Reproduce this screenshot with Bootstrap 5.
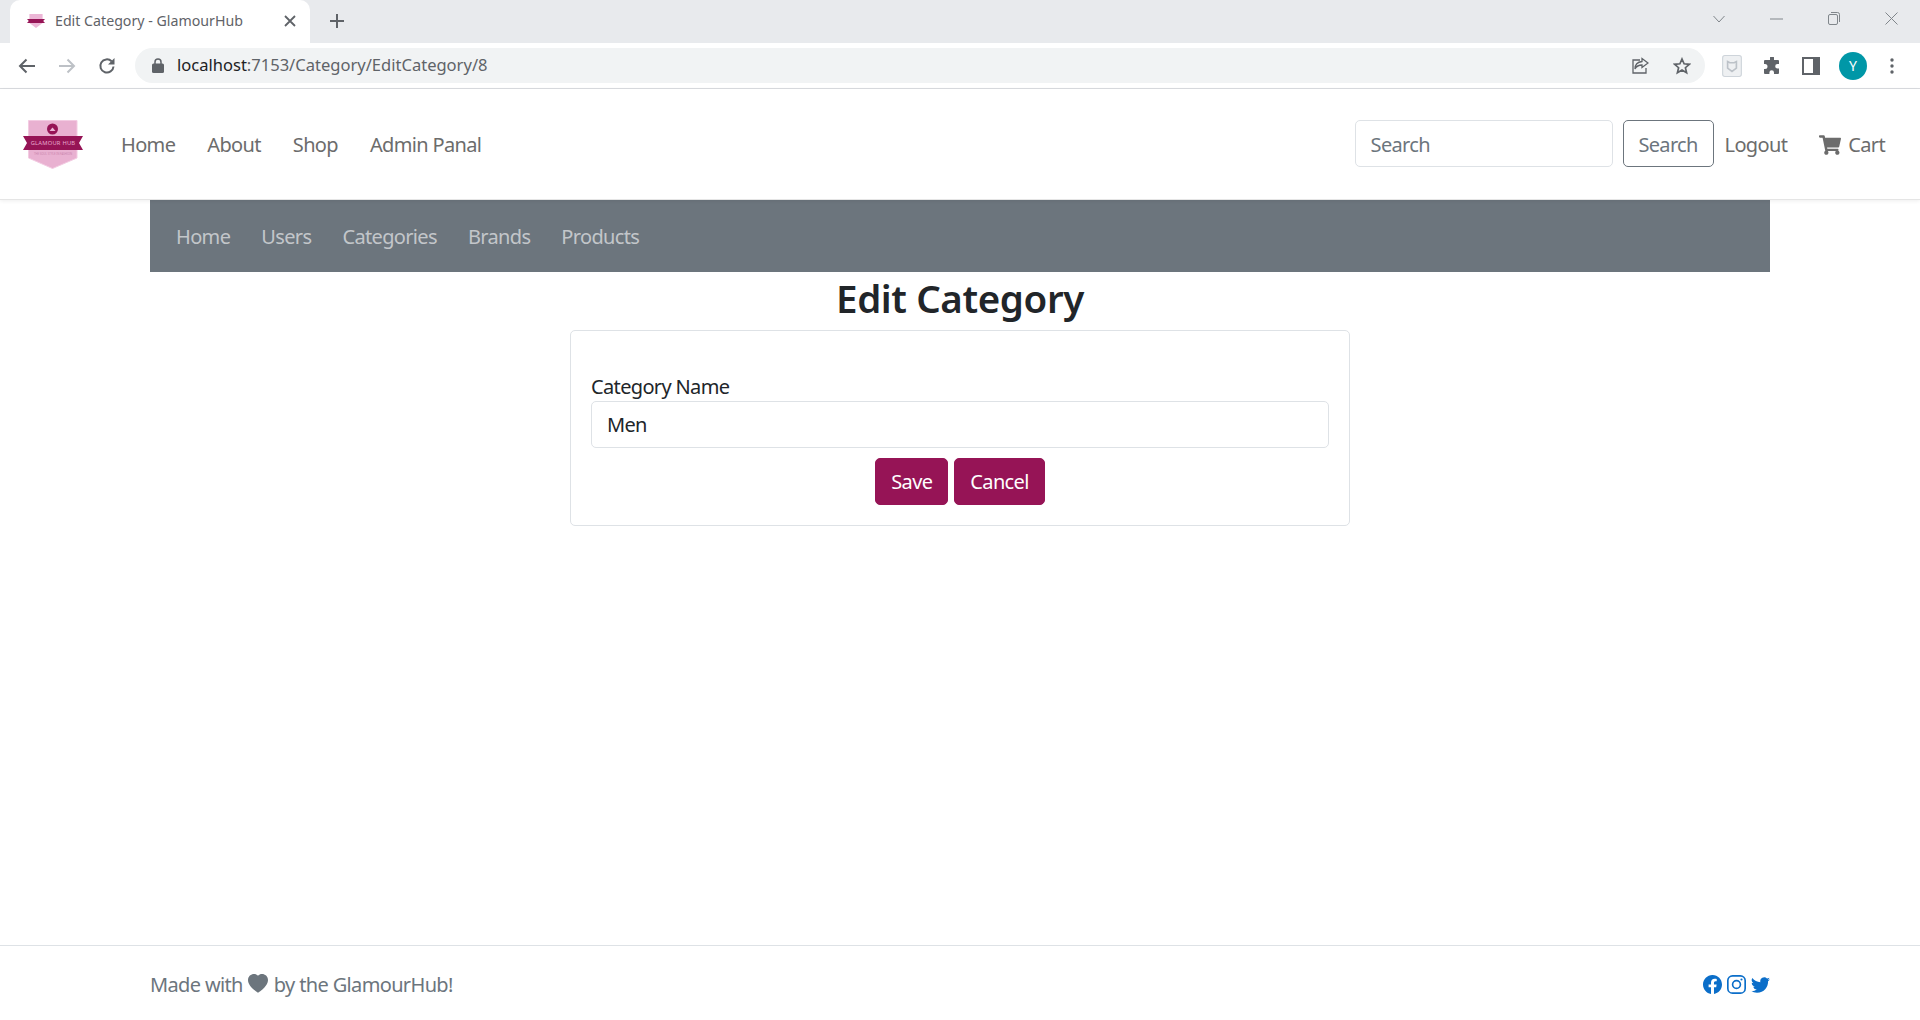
<!DOCTYPE html>
<html lang="en">
<head>
    <meta charset="UTF-8">
    <meta name="viewport" content="width=device-width, initial-scale=1.0">
    <title>Edit Category - GlamourHub</title>
    <link href="https://cdn.jsdelivr.net/npm/bootstrap@5.3.0/dist/css/bootstrap.min.css" rel="stylesheet">
    <style>
        html, body { height: 100%; }
        body { font-family: "Noto Sans", "Open Sans", sans-serif; font-size: 20px; letter-spacing: -.65px; color: #212529; overflow: hidden; }
        .page-shell { height: 1020px; }

        /* browser chrome */
        .tab-strip { height: 43px; background: #e8eaed; }
        .tab-active { width: 300px; height: 43px; margin-left: 10px; background: #fff; border-radius: 10px 10px 0 0; padding: 0 14px 2px 17px; color: #5f6368; letter-spacing: 0; }
        .tab-title { margin-left: 10px; font-size: 14.2px; }
        .new-tab { margin-left: 19px; margin-bottom: 2px; }
        .win-btns { gap: 45px; padding-right: 22px; padding-bottom: 6px; }
        .tool-strip { height: 46px; border-bottom: 1px solid #dadce0; background: #fff; padding-left: 17px; padding-right: 17px; }
        .nav-arrows { gap: 20px; }
        .url-pill { height: 35px; margin-left: 18px; border-radius: 18px; background: #f1f3f4; padding: 0 14px 0 17px; font-size: 16.55px; letter-spacing: 0; color: #5f6368; width: 1570px; }
        .url-host { color: #202124; }
        .url-text { margin-left: 13px; }
        .tool-icons { margin-left: 17px; gap: 21px; }
        .avatar-dot { width: 28px; height: 28px; margin: 0 2px 0 -2px; border-radius: 50%; background: #0097a7; color: #fff; font-size: 14px; letter-spacing: 0; }

        /* site header */
        .site-head { height: 111px; padding: 0 27px 0 23px; border-bottom: 1px solid #e5e5e5; box-shadow: 0 1px 4px rgba(0,0,0,.07); background: #fff; }
        .site-head .nav-link { color: #6c6c6c; padding-top: 10px; }
        .site-logo { margin-top: 2px; }
        .main-links { margin-left: 30px; gap: 16px; }
        .search-form { margin-top: -2px; }
        .search-box { width: 258px; height: 47px; font-size: 20px; letter-spacing: -.65px; border-radius: 5px; padding: 8px 15px 6px; }
        .search-box::placeholder { color: #6c757d; }
        .search-btn { height: 47px; width: 91px; margin-left: 10px; font-size: 20px; letter-spacing: -.65px; color: #6c757d; border-color: #6c757d; border-radius: 5px; padding: 4px 0 0; }
        .logout-link { margin-left: 3px; }
        .cart-link { margin-left: 16px; }
        .cart-link .nav-link { gap: 7px; }

        /* admin bar */
        .admin-bar { width: 1620px; height: 72px; margin: 0 auto; background: #6c757d; padding: 2px 26px 0; gap: 31px; }
        .admin-bar .nav-link { color: rgba(255,255,255,.6); padding: 0; }

        .edit-title { font-size: 38.5px; font-weight: 600; line-height: 48px; margin: 2px 0 8px; text-align: center; letter-spacing: -.4px; }
        .edit-card { width: 780px; height: 196px; margin: 0 auto; border-radius: 5px; padding: 42px 20px 0; border-color: #dee2e6; }
        .edit-label { display: block; line-height: 28px; margin-bottom: 0; }
        .edit-input { height: 47px; font-size: 20px; letter-spacing: -.65px; border-radius: 5px; padding-left: 15px; color: #212529; }
        .form-actions { margin-top: 10px; gap: 6px; }
        .btn-wine { height: 47px; padding: 0 15px; font-size: 20px; letter-spacing: -.65px; background: #961456; border-color: #961456; color: #fff; border-radius: 5px; }

        .site-foot { height: 75px; border-top: 1px solid #dee2e6; padding: 4px 150px 0; color: #6c757d; }
        .heart-icon { margin: 0 1px; position: relative; top: -1px; }
        .social-links { gap: 5px; color: #0b6ec9; margin-top: -1px; }
    </style>
</head>
<body>
<div class="page-shell d-flex flex-column">

    <div class="tab-strip d-flex align-items-end justify-content-between">
        <div class="d-flex align-items-center">
            <div class="tab-active d-flex align-items-center">
                <svg width="18" height="16" viewBox="0 0 60 50"><polygon points="8,2 52,2 52,32 30,48 8,32" fill="#ecb6d6"/><polygon points="0,18 60,18 54,25 60,32 0,32 6,25" fill="#961456"/></svg>
                <span class="tab-title flex-grow-1">Edit Category - GlamourHub</span>
                <svg width="12" height="12" viewBox="0 0 12 12"><path d="M1 1l10 10M11 1L1 11" stroke="#5f6368" stroke-width="1.8"/></svg>
            </div>
            <svg class="new-tab" width="16" height="16" viewBox="0 0 16 16"><path d="M8 1v14M1 8h14" stroke="#5f6368" stroke-width="2"/></svg>
        </div>
        <div class="win-btns d-flex align-items-center h-100">
            <svg width="12" height="8" viewBox="0 0 12 8"><path d="M.5 1l5.5 6 5.5-6" fill="none" stroke="#80868b"/></svg>
            <svg width="13" height="2" viewBox="0 0 13 2"><path d="M0 1h13" stroke="#80868b"/></svg>
            <svg width="12" height="13" viewBox="0 0 12 13"><rect x=".5" y="2.5" width="9" height="10" rx="1.5" fill="none" stroke="#80868b"/><path d="M3 .5h6.5a2 2 0 0 1 2 2V10" fill="none" stroke="#80868b"/></svg>
            <svg width="13" height="13" viewBox="0 0 13 13"><path d="M.5.5l12 12M12.5.5l-12 12" stroke="#80868b"/></svg>
        </div>
    </div>

    <div class="tool-strip d-flex align-items-center">
        <div class="nav-arrows d-flex align-items-center">
            <svg width="20" height="20" viewBox="0 0 20 20"><path d="M18 10H3M9.500 3.500L3 10l6.500 6.500" fill="none" stroke="#5f6368" stroke-width="2"/></svg>
            <svg width="20" height="20" viewBox="0 0 20 20"><path d="M2 10h15M10.500 3.500L17 10l-6.500 6.500" fill="none" stroke="#bdc1c6" stroke-width="2"/></svg>
            <svg width="20" height="20" viewBox="0 0 20 20"><path d="M16.500 10.500a6.600 6.600 0 1 1-1.900-5.200" fill="none" stroke="#5f6368" stroke-width="2"/><path d="M17.500 2v6.500H11z" fill="#5f6368"/></svg>
        </div>
        <div class="url-pill d-flex align-items-center">
            <svg width="12" height="15" viewBox="0 0 12 15"><rect y="5.500" width="12" height="9.500" rx="1.500" fill="#5f6368"/><path d="M3 6V4a3 3 0 0 1 6 0v2" fill="none" stroke="#5f6368" stroke-width="1.500"/></svg>
            <span class="url-text flex-grow-1"><span class="url-host">localhost</span>:7153/Category/EditCategory/8</span>
            <div class="d-flex align-items-center gap-4">
                <svg width="18" height="18" viewBox="0 0 18 18"><path d="M9 3H2v13h13v-5" fill="none" stroke="#5f6368" stroke-width="1.300"/><path d="M11 1.500l6 4.500-6 4.500V8C8 8 5.500 9 4 12c0-4 2.500-7 7-7.500z" fill="#f1f3f4" stroke="#5f6368" stroke-width="1.300"/></svg>
                <svg width="18" height="18" viewBox="0 0 18 18"><path d="M9 2l2.100 4.800 5.200.5-3.900 3.400 1.200 5.100L9 13.100l-4.600 2.700 1.200-5.100L1.700 7.300l5.200-.5z" fill="none" stroke="#5f6368" stroke-width="1.700"/></svg>
            </div>
        </div>
        <div class="tool-icons d-flex align-items-center">
            <svg width="20" height="22" viewBox="0 0 18 20"><rect x=".5" y=".5" width="17" height="19" rx="2" fill="#eef0f2" stroke="#ced4da"/><path d="M5 6l2 1h4l2-1v6l-4 3-4-3z" fill="none" stroke="#bcc2c8" stroke-width="1.500"/></svg>
            <svg width="18" height="18" viewBox="0 0 18 18"><path d="M7 1a2 2 0 0 1 4 0v2h4a1 1 0 0 1 1 1v3h-1.500a2.300 2.300 0 0 0 0 4.600H16V16a1 1 0 0 1-1 1h-4v-1.500a2.300 2.300 0 0 0-4.600 0V17H2a1 1 0 0 1-1-1v-4h1a2.500 2.500 0 0 0 0-5H1V4a1 1 0 0 1 1-1h5z" fill="#5f6368"/></svg>
            <svg width="18" height="18" viewBox="0 0 18 18"><rect width="18" height="18" fill="#5f6368"/><rect x="2" y="2" width="9" height="14" fill="#fff"/></svg>
            <div class="avatar-dot d-flex align-items-center justify-content-center">Y</div>
            <svg width="4" height="16" viewBox="0 0 4 16"><circle cx="2" cy="2" r="1.700" fill="#5f6368"/><circle cx="2" cy="8" r="1.700" fill="#5f6368"/><circle cx="2" cy="14" r="1.700" fill="#5f6368"/></svg>
        </div>
    </div>

    <nav class="site-head navbar navbar-expand d-flex align-items-center">
        <svg class="site-logo" width="60" height="50" viewBox="0 0 60 50">
            <polygon points="5.500,.5 54,.5 54,38 29.500,48.500 5.500,38" fill="#e9b1d1" stroke="#f3cbe2"/>
            <circle cx="29.500" cy="9" r="5.500" fill="#961456"/>
            <path d="M26.500 11h6l-3-3.500z" fill="#ecb6d6"/>
            <polygon points="0,16 60,16 56,23 60,30 0,30 4,23" fill="#961456"/>
            <text x="30" y="25" font-size="5.800" fill="#e8a9cd" text-anchor="middle" letter-spacing=".2">GLAMOUR HUB</text>
            <text x="30" y="35" font-size="2.800" fill="#c984ad" text-anchor="middle" letter-spacing="0">THE SOUL STYLE IN FASHION</text>
        </svg>
        <ul class="navbar-nav main-links">
            <li class="nav-item"><a class="nav-link" href="#">Home</a></li>
            <li class="nav-item"><a class="nav-link" href="#">About</a></li>
            <li class="nav-item"><a class="nav-link" href="#">Shop</a></li>
            <li class="nav-item"><a class="nav-link" href="#">Admin Panal</a></li>
        </ul>
        <form class="search-form d-flex align-items-center ms-auto">
            <input class="form-control search-box" type="search" placeholder="Search" aria-label="Search">
            <button class="btn search-btn" type="button">Search</button>
        </form>
        <ul class="navbar-nav align-items-center">
            <li class="nav-item logout-link"><a class="nav-link" href="#">Logout</a></li>
            <li class="nav-item cart-link">
                <a class="nav-link d-flex align-items-center" href="#">
                    <svg width="22" height="20" viewBox="0 0 576 512"><path fill="#6c6c6c" d="M528.12 301.319l47.273-208C578.806 78.301 567.391 64 551.99 64H159.208l-9.166-44.81C147.758 8.021 137.93 0 126.529 0H24C10.745 0 0 10.745 0 24v16c0 13.255 10.745 24 24 24h69.883l70.248 343.435C147.325 417.1 136 435.222 136 456c0 30.928 25.072 56 56 56s56-25.072 56-56c0-15.674-6.447-29.835-16.824-40h209.647C430.447 426.165 424 440.326 424 456c0 30.928 25.072 56 56 56s56-25.072 56-56c0-22.172-12.888-41.332-31.579-50.405l5.517-24.276c3.413-15.018-8.002-29.319-23.403-29.319H218.117l-6.545-32h293.145c11.206 0 20.92-7.754 23.403-18.681z"/></svg>
                    Cart
                </a>
            </li>
        </ul>
    </nav>

    <ul class="admin-bar nav align-items-center flex-shrink-0">
        <li class="nav-item"><a class="nav-link" href="#">Home</a></li>
        <li class="nav-item"><a class="nav-link" href="#">Users</a></li>
        <li class="nav-item"><a class="nav-link" href="#">Categories</a></li>
        <li class="nav-item"><a class="nav-link" href="#">Brands</a></li>
        <li class="nav-item"><a class="nav-link" href="#">Products</a></li>
    </ul>

    <main class="flex-grow-1">
        <h2 class="edit-title">Edit Category</h2>
        <div class="card edit-card">
            <label class="edit-label" for="categoryName">Category Name</label>
            <input class="form-control edit-input" id="categoryName" value="Men">
            <div class="form-actions d-flex justify-content-center">
                <button class="btn btn-wine" type="button">Save</button>
                <button class="btn btn-wine" type="button">Cancel</button>
            </div>
        </div>
    </main>

    <footer class="site-foot d-flex align-items-center justify-content-between flex-shrink-0">
        <div class="d-flex align-items-center">Made with&nbsp;<svg class="heart-icon" width="20" height="20" viewBox="0 0 16 16"><path fill="#6c757d" d="M8 1.314C12.438-3.248 23.534 4.735 8 15-7.534 4.736 3.562-3.248 8 1.314z"/></svg>&nbsp;by the GlamourHub!</div>
        <div class="social-links d-flex align-items-center">
            <svg width="19" height="19" viewBox="0 0 16 16"><path fill="currentColor" d="M16 8.049c0-4.446-3.582-8.05-8-8.05C3.58 0-.002 3.603-.002 8.05c0 4.017 2.926 7.347 6.75 7.951v-5.625h-2.03V8.05H6.75V6.275c0-2.017 1.195-3.131 3.022-3.131.876 0 1.791.157 1.791.157v1.98h-1.009c-.993 0-1.303.621-1.303 1.258v1.51h2.218l-.354 2.326H9.25V16c3.824-.604 6.75-3.934 6.75-7.951z"/></svg>
            <svg width="19" height="19" viewBox="0 0 16 16"><rect x=".7" y=".7" width="14.600" height="14.600" rx="4" fill="none" stroke="currentColor" stroke-width="1.400"/><circle cx="8" cy="8" r="3.300" fill="none" stroke="currentColor" stroke-width="1.400"/><circle cx="12.200" cy="3.800" r=".9" fill="currentColor"/></svg>
            <svg width="19" height="19" viewBox="0 0 16 16"><path fill="currentColor" d="M5.026 15c6.038 0 9.341-5.003 9.341-9.334 0-.14 0-.282-.006-.422A6.685 6.685 0 0 0 16 3.542a6.658 6.658 0 0 1-1.889.518 3.301 3.301 0 0 0 1.447-1.817 6.533 6.533 0 0 1-2.087.793A3.286 3.286 0 0 0 7.875 6.03a9.325 9.325 0 0 1-6.767-3.429 3.289 3.289 0 0 0 1.018 4.382A3.323 3.323 0 0 1 .64 6.575v.045a3.288 3.288 0 0 0 2.632 3.218 3.203 3.203 0 0 1-.865.115 3.23 3.23 0 0 1-.614-.057 3.283 3.283 0 0 0 3.067 2.277A6.588 6.588 0 0 1 .78 13.58a6.32 6.32 0 0 1-.78-.045A9.344 9.344 0 0 0 5.026 15z"/></svg>
        </div>
    </footer>
</div>
<script src="https://cdn.jsdelivr.net/npm/bootstrap@5.3.0/dist/js/bootstrap.bundle.min.js"></script>
</body>
</html>
